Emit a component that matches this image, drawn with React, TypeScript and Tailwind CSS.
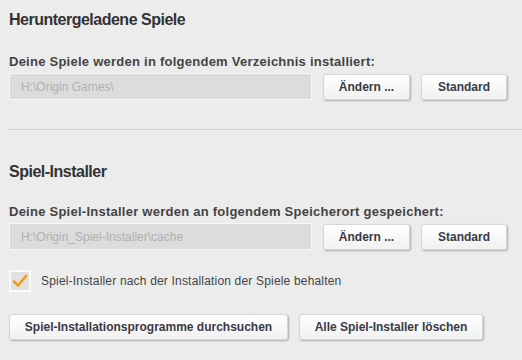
import React from "react";

const font = { fontFamily: '"Liberation Sans", Arial, sans-serif' };

function Btn({ label, className = "" }: { label: string; className?: string }) {
  return (
    <button
      className={`h-[26px] rounded-[3px] border border-[#d6d6d6] bg-gradient-to-b from-white to-[#f1f1f1] text-[12px] font-bold text-[#3a3a44] shadow-[1px_1px_2px_rgba(0,0,0,0.28)] ${className}`}
    >
      {label}
    </button>
  );
}

function PathRow({ value }: { value: string }) {
  return (
    <div className="flex items-center">
      <div className="flex h-[27px] w-[303px] items-center border border-[#f7f7f7] bg-[#dcdcdc] pl-[11px] text-[12px] text-[#b0b0b0]">
        {value}
      </div>
      <Btn label="Ändern ..." className="ml-[11px] w-[87px]" />
      <Btn label="Standard" className="ml-[11px] w-[86px]" />
    </div>
  );
}

export default function App() {
  return (
    <div className="h-[360px] w-[522px] overflow-hidden bg-[#ececec]" style={font}>
      <div className="pl-[9px]">
        <h2 className="pt-[10px] text-[16px] font-bold leading-[20px] tracking-[-0.5px] text-[#333]">
          Heruntergeladene Spiele
        </h2>
        <p className="mt-[24px] text-[13px] font-bold leading-[16px] tracking-[0.25px] text-[#444]">
          Deine Spiele werden in folgendem Verzeichnis installiert:
        </p>
        <div className="mt-[3px]">
          <PathRow value="H:\Origin Games\" />
        </div>
      </div>

      <div className="mt-[29px] ml-[9px] h-[2px] border-t border-[#cfcfcf] border-b-white" />

      <div className="pl-[9px]">
        <h2 className="mt-[31px] text-[16px] font-bold leading-[20px] tracking-[-0.5px] text-[#333]">
          Spiel-Installer
        </h2>
        <p className="mt-[22px] text-[13px] font-bold leading-[16px] tracking-[0.25px] text-[#444]">
          Deine Spiel-Installer werden an folgendem Speicherort gespeichert:
        </p>
        <div className="mt-[3px]">
          <PathRow value="H:\Origin_Spiel-Installer\cache" />
        </div>

        <label className="mt-[20px] flex items-center">
          <span className="flex h-[22px] w-[22px] items-center justify-center border-2 border-[#fafafa] bg-[#e2e2e2]">
            <svg width="16" height="14" viewBox="0 0 16 14">
              <path d="M2 7.5 L6 11.5 L14 2" fill="none" stroke="#f39c12" strokeWidth="2.6" strokeLinecap="round" strokeLinejoin="round" />
            </svg>
          </span>
          <span className="ml-[10px] text-[12px] tracking-[0.18px] text-[#444]">
            Spiel-Installer nach der Installation der Spiele behalten
          </span>
        </label>

        <div className="mt-[22px] flex">
          <Btn label="Spiel-Installationsprogramme durchsuchen" className="w-[279px]" />
          <Btn label="Alle Spiel-Installer löschen" className="ml-[11px] w-[184px]" />
        </div>
      </div>
    </div>
  );
}
